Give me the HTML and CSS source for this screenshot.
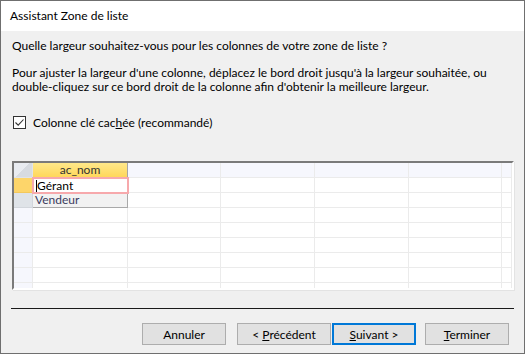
FILE: index.html
```html
<!DOCTYPE html>
<html lang="fr">
<head>
    <meta charset="UTF-8">
    <title>Assistant Zone de liste</title>
    <link rel="stylesheet" href="styles.css">
</head>
<body>
    <div class="window">
        <div class="titlebar">Assistant Zone de liste</div>

        <div class="content">
            <p class="question">Quelle largeur souhaitez-vous pour les colonnes de votre zone de liste ?</p>
            <p class="help">Pour ajuster la largeur d'une colonne, déplacez le bord droit jusqu'à la largeur souhaitée, ou<br>double-cliquez sur ce bord droit de la colonne afin d'obtenir la meilleure largeur.</p>

            <label class="check-row">
                <span class="checkbox">
                    <svg width="11" height="11" viewBox="0 0 11 11"><path d="M1.5 5.5 L4.2 8.2 L9.5 2.5" fill="none" stroke="#333" stroke-width="1.1"/></svg>
                </span>
                <span>Colonne clé cac<u>h</u>ée (recommandé)</span>
            </label>

            <div class="datasheet">
                <div class="cell corner"></div>
                <div class="cell head active">ac_nom</div>
                <div class="cell head"></div>
                <div class="cell head"></div>
                <div class="cell head"></div>
                <div class="cell head"></div>
                <div class="cell head"></div>

                <div class="cell sel current"></div>
                <div class="cell edit">Gérant</div>
                <div class="cell"></div><div class="cell"></div><div class="cell"></div><div class="cell"></div><div class="cell"></div>

                <div class="cell sel second"></div>
                <div class="cell value">Vendeur</div>
                <div class="cell"></div><div class="cell"></div><div class="cell"></div><div class="cell"></div><div class="cell"></div>

                <div class="cell sel"></div><div class="cell"></div><div class="cell"></div><div class="cell"></div><div class="cell"></div><div class="cell"></div><div class="cell"></div>
                <div class="cell sel"></div><div class="cell"></div><div class="cell"></div><div class="cell"></div><div class="cell"></div><div class="cell"></div><div class="cell"></div>
                <div class="cell sel"></div><div class="cell"></div><div class="cell"></div><div class="cell"></div><div class="cell"></div><div class="cell"></div><div class="cell"></div>
                <div class="cell sel"></div><div class="cell"></div><div class="cell"></div><div class="cell"></div><div class="cell"></div><div class="cell"></div><div class="cell"></div>
                <div class="cell sel"></div><div class="cell"></div><div class="cell"></div><div class="cell"></div><div class="cell"></div><div class="cell"></div><div class="cell"></div>
                <div class="cell sel"></div><div class="cell"></div><div class="cell"></div><div class="cell"></div><div class="cell"></div><div class="cell"></div><div class="cell"></div>
            </div>

            <div class="separator"></div>

            <div class="buttons">
                <button class="btn cancel">Annuler</button>
                <div class="nav-pair">
                    <button class="btn wide">&lt; <u>P</u>récédent</button>
                    <button class="btn default"><u>S</u>uivant &gt;</button>
                </div>
                <button class="btn"><u>T</u>erminer</button>
            </div>
        </div>
    </div>
</body>
</html>
```

FILE: styles.css
```css
body {
    margin: 0;
    background: #3a3a3a;
    font-family: Lato, "Liberation Sans", sans-serif;
    font-size: 12px;
    color: #000;
}
.window {
    width: 525px;
    height: 354px;
    box-sizing: border-box;
    border: 1px solid #6f6f6f;
    background: #f0f0f0;
    display: flex;
    flex-direction: column;
    overflow: hidden;
}
.titlebar {
    height: 30px;
    line-height: 30px;
    background: #fff;
    padding-left: 9px;
}
.content {
    flex: 1;
    padding: 7px 10px 0 11px;
    display: flex;
    flex-direction: column;
}
.question,
.help {
    margin: 0;
    line-height: 15px;
    white-space: nowrap;
}
.help {
    margin-top: 13px;
    line-height: 14px;
}
.check-row {
    display: flex;
    align-items: center;
    gap: 7px;
    margin-top: 21px;
    line-height: 15px;
}
.checkbox {
    width: 11px;
    height: 11px;
    border: 1px solid #333;
    background: #fff;
    display: flex;
    margin-left: 1px;
}
.datasheet {
    margin-top: 31px;
    width: 502px;
    height: 129px;
    flex-shrink: 0;
    box-sizing: border-box;
    border-top: 2px solid #7a7a7a;
    border-left: 2px solid #7a7a7a;
    border-right: 2px solid #fff;
    border-bottom: 2px solid #fff;
    box-shadow: 1px 1px 0 #e3e3e3;
    background: #fff;
    display: grid;
    grid-template-columns: 19px 95px 93px 94px 94px 93px 1fr;
    grid-auto-rows: 15px;
    overflow: hidden;
}
.cell {
    box-sizing: border-box;
    border-right: 1px solid #ebebeb;
    border-bottom: 1px solid #ebebeb;
    background: #fff;
    font-size: 12px;
    line-height: 14px;
    white-space: nowrap;
    overflow: hidden;
}
.corner {
    background: linear-gradient(135deg, #e9ecf1 50%, #d7dbe1 50%);
    border-color: #e0e3e8;
}
.head {
    background: #f6f7fd;
    text-align: center;
    color: #333;
}
.head.active {
    background: linear-gradient(#ffe88a, #ffd75a);
    border-right-color: #a5a5a5;
    border-bottom-color: #f0d27a;
}
.sel {
    background: #f6f7fd;
}
.sel.current {
    background: #fdd56a;
    border-color: #f3c85c;
}
.sel.second {
    background: #dfe3e8;
    border-color: #d2d6dc;
}
.edit {
    position: relative;
    border: 2px solid #f7a9ac;
    margin: -1px 0 0 -1px;
    width: 97px;
    height: 17px;
    padding-left: 3px;
    line-height: 13px;
}
.edit::before {
    content: "";
    position: absolute;
    left: 2px;
    top: 1px;
    width: 1px;
    height: 12px;
    background: #000;
}
.value {
    background: #f2f2f2;
    border-right-color: #a9a9a9;
    border-bottom-color: #a9a9a9;
    color: #3b3b5e;
    padding-left: 2px;
}
.separator {
    margin-top: 18px;
    margin-left: -1px;
    width: 503px;
    height: 1px;
    flex-shrink: 0;
    background: #1a1a1a;
}
.buttons {
    display: flex;
    justify-content: flex-end;
    gap: 9px;
    margin-top: 14px;
    margin-right: 5px;
}
.nav-pair {
    display: flex;
    gap: 1px;
}
.btn {
    width: 84px;
    height: 22px;
    box-sizing: border-box;
    border: 1px solid #adadad;
    background: #e1e1e1;
    font-family: inherit;
    font-size: 12px;
    color: #000;
    padding: 0;
}
.btn.cancel {
    margin-right: 2px;
}
.btn.wide {
    width: 94px;
}
.btn.default {
    border: 2px solid #0078d7;
}
```
